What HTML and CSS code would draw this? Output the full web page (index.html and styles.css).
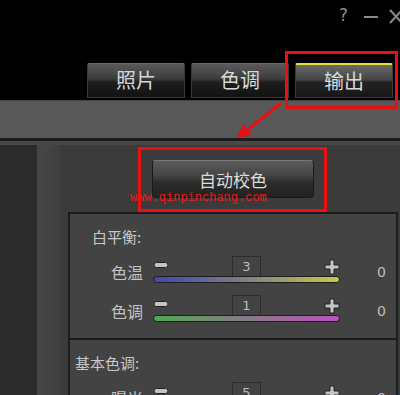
FILE: index.html
```html
<!DOCTYPE html>
<html lang="zh">
  <head>
    <meta charset="UTF-8" />
    <meta name="viewport" content="width=device-width, initial-scale=1.0" />
    <title>输出</title>
    <link rel="stylesheet" href="styles.css">
  </head>
  <body>
    <div class="window">
      <div class="titlebar">
        <span class="help">?</span>
        <svg class="win-btn" width="16" height="16" viewBox="0 0 16 16">
          <line x1="1" y1="9" x2="15" y2="9" stroke="#8a8a8a" stroke-width="2" />
        </svg>
        <svg class="win-btn" width="16" height="16" viewBox="0 0 16 16">
          <path d="M2 2 L14 15 M14 2 L2 15" stroke="#8a8a8a" stroke-width="2" fill="none" />
        </svg>
      </div>

      <div class="tabs">
        <div class="tab">照片</div>
        <div class="tab">色调</div>
        <div class="tab active">输出</div>
      </div>

      <div class="toolbar"></div>

      <div class="main">
        <div class="side"></div>
        <div class="track"></div>
        <div class="content">
          <div class="action">
            <button class="auto-btn">自动校色</button>
          </div>

          <div class="panel">
            <div class="section">
              <div class="section-title">白平衡:</div>
              <div class="row">
                <div class="label">色温</div>
                <div class="control">
                  <div class="control-top">
                    <svg class="minus" width="16" height="8" viewBox="0 0 16 8"><rect x="1" y="1.5" width="14" height="5" rx="2.5" fill="#c4c4c4" stroke="#222" stroke-width="1" /></svg>
                    <div class="value-box">3</div>
                    <svg class="plus" width="16" height="16" viewBox="0 0 16 16"><path d="M6 1 H10 V6 H15 V10 H10 V15 H6 V10 H1 V6 H6 Z" fill="#c4c4c4" stroke="#222" stroke-width="1" /></svg>
                  </div>
                  <div class="bar bar-temp"></div>
                </div>
                <div class="num">0</div>
              </div>
              <div class="row">
                <div class="label">色调</div>
                <div class="control">
                  <div class="control-top">
                    <svg class="minus" width="16" height="8" viewBox="0 0 16 8"><rect x="1" y="1.5" width="14" height="5" rx="2.5" fill="#c4c4c4" stroke="#222" stroke-width="1" /></svg>
                    <div class="value-box">1</div>
                    <svg class="plus" width="16" height="16" viewBox="0 0 16 16"><path d="M6 1 H10 V6 H15 V10 H10 V15 H6 V10 H1 V6 H6 Z" fill="#c4c4c4" stroke="#222" stroke-width="1" /></svg>
                  </div>
                  <div class="bar bar-tint"></div>
                </div>
                <div class="num">0</div>
              </div>
            </div>

            <div class="section">
              <div class="section-title wide">基本色调:</div>
              <div class="row">
                <div class="label">曝光</div>
                <div class="control">
                  <div class="control-top">
                    <svg class="minus" width="16" height="8" viewBox="0 0 16 8"><rect x="1" y="1.5" width="14" height="5" rx="2.5" fill="#c4c4c4" stroke="#222" stroke-width="1" /></svg>
                    <div class="value-box">5</div>
                    <svg class="plus" width="16" height="16" viewBox="0 0 16 16"><path d="M6 1 H10 V6 H15 V10 H10 V15 H6 V10 H1 V6 H6 Z" fill="#c4c4c4" stroke="#222" stroke-width="1" /></svg>
                  </div>
                  <div class="bar bar-gray"></div>
                </div>
                <div class="num">0</div>
              </div>
            </div>
          </div>
        </div>
      </div>

      <!-- annotations drawn over the screenshot -->
      <div class="mark mark-tab"></div>
      <div class="mark mark-btn"></div>
      <div class="watermark">www.qinpinchang.com</div>
      <svg class="arrow" width="400" height="395" viewBox="0 0 400 395">
        <line x1="281" y1="103" x2="246" y2="131" stroke="#e81010" stroke-width="3" />
        <polygon points="237,138 251,135 243,124" fill="#e81010" />
      </svg>
    </div>
  </body>
</html>
```

FILE: styles.css
```css
body {
  margin: 0;
  padding: 0;
  background: #000;
  font-family: "Noto Sans CJK SC", "Noto Sans", sans-serif;
}
.window {
  position: relative;
  width: 400px;
  height: 395px;
  overflow: hidden;
  display: flex;
  flex-direction: column;
}
.titlebar {
  flex-shrink: 0;
  height: 63px;
  display: flex;
  justify-content: flex-end;
  align-items: flex-start;
  gap: 9px;
  padding: 5px 0 0 0;
  margin-right: -4px;
  box-sizing: border-box;
}
.help {
  font-family: "DejaVu Sans", sans-serif;
  font-size: 17px;
  line-height: 20px;
  color: #8a8a8a;
  margin-right: 6px;
}
.win-btn {
  margin-top: 3px;
}
.tabs {
  flex-shrink: 0;
  display: flex;
  gap: 6px;
  padding-left: 87px;
  height: 35px;
}
.tab {
  width: 98px;
  box-sizing: border-box;
  border: 1px solid #3a3a3a;
  border-top-color: #6a6a6a;
  border-radius: 2px 2px 0 0;
  background: linear-gradient(#5a5a5a, #3c3c3c 45%, #1e1e1e 55%, #121212);
  color: #d8d8d8;
  font-size: 20px;
  line-height: 32px;
  text-align: center;
}
.tab.active {
  border-top: 2px solid #e2e23a;
  background: linear-gradient(#6a6a6a, #454545 45%, #222 55%, #161616);
  line-height: 31px;
}
.toolbar {
  flex-shrink: 0;
  height: 37px;
  margin-top: 2px;
  background: #585858;
  border-top: 1px solid #454545;
  border-bottom: 3px solid #1c1c1c;
}
.main {
  flex: 1;
  min-height: 0;
  display: flex;
  border-top: 4px solid #474747;
}
.side {
  width: 37px;
  background: #2b2b2b;
}
.track {
  width: 23px;
  background: linear-gradient(90deg, #474747, #404040);
}
.content {
  flex: 1;
  background: #3b3b3b;
  padding-top: 15px;
}
.action {
  display: flex;
  padding-left: 92px;
}
.auto-btn {
  width: 162px;
  height: 38px;
  border: 1px solid #1a1a1a;
  border-top-color: #777;
  border-radius: 4px;
  background: linear-gradient(#5c5c5c, #444 40%, #2c2c2c 60%, #222);
  color: #dcdcdc;
  font-family: "Noto Sans CJK SC", sans-serif;
  font-size: 17px;
  padding: 0;
}
.panel {
  margin: 14px 2px 0 8px;
  border: 2px solid #1c1c1c;
  background: #434343;
}
.section {
  padding: 13px 0 15px;
}
.section + .section {
  border-top: 2px solid #1c1c1c;
}
.section-title {
  font-size: 15px;
  line-height: 20px;
  color: #c8c8c8;
  padding-left: 22px;
}
.section-title.wide {
  padding-left: 5px;
}
.row {
  display: grid;
  grid-template-columns: 83px 187px 46px;
  margin-top: 9px;
}
.row + .row {
  margin-top: 11px;
}
.label {
  padding: 4px 10px 0 0;
  line-height: 24px;
  font-size: 16px;
  color: #c4c4c4;
  text-align: right;
}
.control {
  display: flex;
  flex-direction: column;
}
.control-top {
  height: 21px;
  display: flex;
  justify-content: space-between;
  align-items: center;
}
.minus {
  margin-top: -4px;
}
.value-box {
  width: 29px;
  height: 21px;
  box-sizing: border-box;
  border: 1px solid #2c2c2c;
  color: #bdbdbd;
  font-family: "DejaVu Sans", sans-serif;
  font-size: 13px;
  line-height: 19px;
  text-align: center;
}
.bar {
  height: 5px;
  margin-top: -1px;
  border: 1px solid #1e1e1e;
  border-radius: 4px;
}
.bar-temp {
  background: linear-gradient(90deg, #4545b0, #7a7a8a 45%, #c8c84a);
}
.bar-tint {
  background: linear-gradient(90deg, #52a852, #808080 45%, #c04ec0);
}
.bar-gray {
  background: linear-gradient(90deg, #333, #ddd);
}
.num {
  padding-top: 4px;
  line-height: 24px;
  font-family: "DejaVu Sans", sans-serif;
  font-size: 14px;
  color: #bdbdbd;
  text-align: right;
}
.mark {
  position: absolute;
  border: 3px solid #e81010;
}
.mark-tab {
  left: 285px;
  top: 51px;
  width: 107px;
  height: 52px;
}
.mark-btn {
  left: 138px;
  top: 147px;
  width: 183px;
  height: 59px;
}
.watermark {
  position: absolute;
  left: 130px;
  top: 190px;
  font-family: "Liberation Mono", monospace;
  font-size: 12px;
  line-height: 16px;
  color: #e81c1c;
}
.arrow {
  position: absolute;
  left: 0;
  top: 0;
  pointer-events: none;
}
```
